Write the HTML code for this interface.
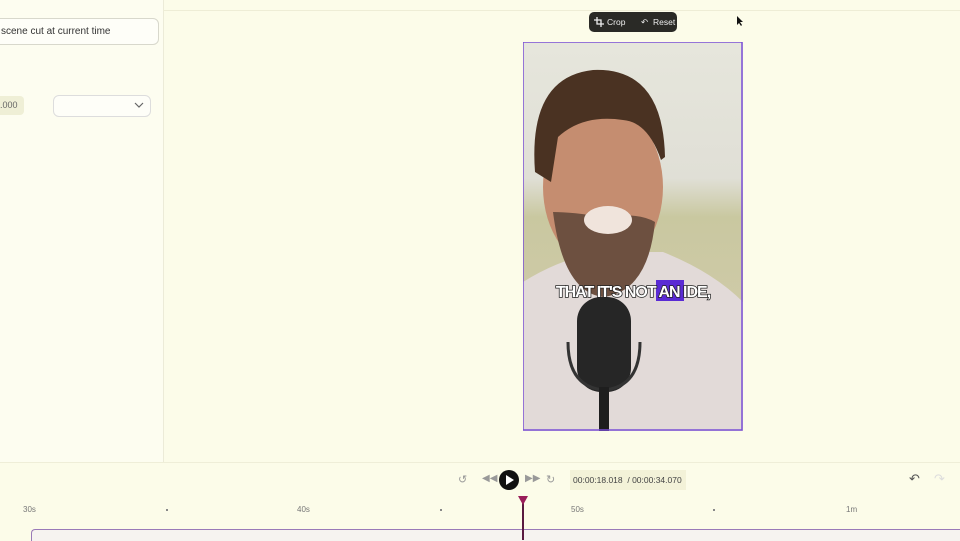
<!DOCTYPE html>
<html><head><style>
body{margin:0;width:960px;height:540px;overflow:hidden;background:#fcfce9;font-family:"Liberation Sans",sans-serif;position:relative}
.a{position:absolute}
</style></head><body>
<div class="a" style="left:0;top:0;width:163px;height:462px;background:#fdfdf0;border-right:1px solid #ecebd8"></div>
<div class="a" style="left:163px;top:10px;width:797px;height:1px;background:#eeedd6"></div>
<div class="a" style="left:-10px;top:18px;width:167px;height:25px;border:1px solid #d8d8cc;border-radius:6px;background:#fefef8;font-size:10px;line-height:25px;color:#333;text-indent:10px">scene cut at current time</div>
<div class="a" style="left:0;top:96px;width:24px;height:19px;background:#efefd6;border-radius:0 4px 4px 0;font-size:9px;line-height:19px;color:#666">.000</div>
<div class="a" style="left:53px;top:95px;width:96px;height:20px;border:1px solid #ddd;border-radius:6px;background:#fefef8"></div>
<svg class="a" style="left:134px;top:101px" width="10" height="8"><path d="M1 2 L5 6 L9 2" stroke="#666" fill="none" stroke-width="1.2"/></svg>
<div class="a" style="left:589px;top:12px;width:88px;height:20px;background:#2a2a26;border-radius:5px;color:#eee;font-size:8.5px;line-height:20px">
<svg class="a" style="left:5px;top:5px" width="10" height="10"><path d="M3 0 V7 H10 M0 3 H7 V10" stroke="#eee" fill="none" stroke-width="1.3"/></svg><span class="a" style="left:18px">Crop</span><span class="a" style="left:52px">↶</span><span class="a" style="left:64px">Reset</span></div>
<svg class="a" style="left:736px;top:15px" width="8" height="12"><path d="M1 1 L1 10 L3 8 L5 11 L6 10 L4 7 L7 7 Z" fill="#111"/></svg>
<svg class="a" style="left:523px;top:42px" width="220" height="389" viewBox="0 0 220 389">
<defs><linearGradient id="bg" x1="0" y1="0" x2="0" y2="1"><stop offset="0" stop-color="#e6e6dc"/><stop offset=".35" stop-color="#e0dfd6"/><stop offset=".45" stop-color="#c9c8a0"/><stop offset=".7" stop-color="#cfcaa8"/><stop offset="1" stop-color="#d8d2c4"/></linearGradient></defs>
<rect width="220" height="389" fill="url(#bg)"/>
<path d="M0 240 Q40 215 80 210 L140 210 Q190 230 220 260 L220 389 L0 389Z" fill="#e2dad8"/>
<ellipse cx="80" cy="145" rx="60" ry="82" fill="#c58d70"/>
<path d="M12 130 Q5 35 70 28 Q140 25 142 115 L138 118 Q125 80 100 78 Q60 72 35 95 L28 140Z" fill="#4a3222"/>
<path d="M30 170 Q40 250 80 255 Q125 250 132 180 Q115 170 80 175 Q50 170 30 170Z" fill="#6d5040"/>
<ellipse cx="85" cy="178" rx="24" ry="14" fill="#f0e4dc"/>
<rect x="54" y="255" width="54" height="95" rx="24" fill="#262626"/>
<path d="M45 300 Q45 345 81 348 Q117 345 117 300" stroke="#333" stroke-width="3" fill="none"/>
<rect x="76" y="345" width="10" height="44" fill="#1e1e1e"/>
<rect x="0" y="0" width="219" height="388" fill="none" stroke="#7a4fd6" stroke-width="1.5"/>
<rect x="133" y="238" width="28" height="21" fill="#5a2bd4"/>
<text x="110" y="255" text-anchor="middle" font-family="Liberation Sans" font-weight="bold" font-size="16" fill="#fff" letter-spacing="-1" style="paint-order:stroke" stroke="#222" stroke-width="1.5">THAT IT'S NOT AN IDE,</text>
</svg>
<div class="a" style="left:0;top:462px;width:960px;height:1px;background:#efeed8"></div>
<span class="a" style="left:458px;top:473px;font-size:11px;color:#999">↺</span>
<span class="a" style="left:482px;top:473px;font-size:10px;color:#999">◀◀</span>
<div class="a" style="left:499px;top:470px;width:20px;height:20px;border-radius:50%;background:#111"></div>
<svg class="a" style="left:505px;top:475px" width="10" height="10"><path d="M1 0 L9 5 L1 10Z" fill="#fff"/></svg>
<span class="a" style="left:525px;top:473px;font-size:10px;color:#999">▶▶</span>
<span class="a" style="left:546px;top:473px;font-size:11px;color:#999">↻</span>
<div class="a" style="left:570px;top:470px;width:116px;height:20px;background:#f3f2d8;font-size:8.5px;line-height:20px;color:#444;text-indent:3px">00:00:18.018 &nbsp;/ 00:00:34.070</div>
<span class="a" style="left:909px;top:471px;font-size:13px;color:#555">↶</span>
<span class="a" style="left:934px;top:471px;font-size:13px;color:#ddd">↷</span>
<span class="a" style="left:23px;top:505px;font-size:8px;color:#777">30s</span>
<span class="a" style="left:297px;top:505px;font-size:8px;color:#777">40s</span>
<span class="a" style="left:571px;top:505px;font-size:8px;color:#777">50s</span>
<span class="a" style="left:846px;top:505px;font-size:8px;color:#777">1m</span>
<div class="a" style="left:166px;top:509px;width:2px;height:2px;background:#888"></div>
<div class="a" style="left:440px;top:509px;width:2px;height:2px;background:#888"></div>
<div class="a" style="left:713px;top:509px;width:2px;height:2px;background:#888"></div>
<div class="a" style="left:31px;top:529px;width:929px;height:11px;border-top:1.5px solid #9a7ab8;border-left:1px solid #9a7ab8;border-radius:4px 0 0 0;background:#f6f3f0"></div>
<div class="a" style="left:522px;top:500px;width:2px;height:40px;background:#5a1a40"></div>
<svg class="a" style="left:518px;top:496px" width="10" height="10"><path d="M0 0 L10 0 L5 9Z" fill="#9a1e5a"/></svg>
</body></html>
